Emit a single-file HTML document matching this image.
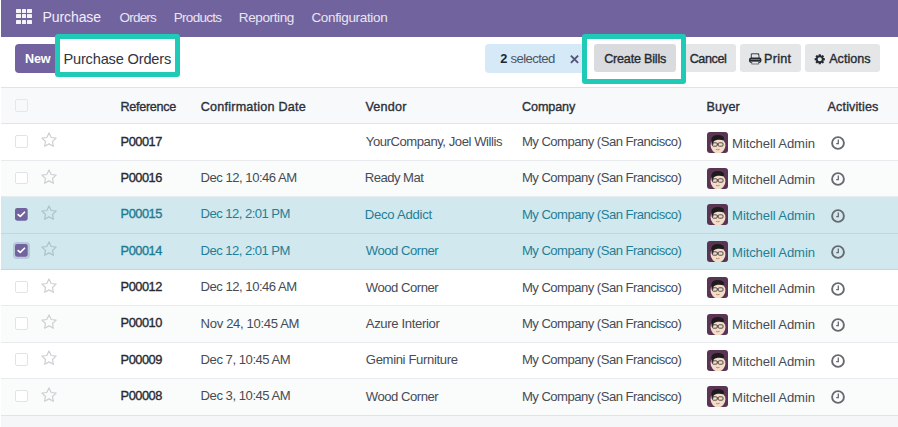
<!DOCTYPE html>
<html><head><meta charset="utf-8"><style>
html,body{margin:0;padding:0;}
body{width:898px;height:427px;overflow:hidden;position:relative;background:#fff;font-family:"Liberation Sans",sans-serif;}
.t{position:absolute;white-space:nowrap;line-height:1;}
.r{position:absolute;}
</style></head><body>
<div class="r" style="left:1px;top:0px;width:897px;height:37px;background:#71639e;"></div>
<div class="r" style="left:16.0px;top:8.5px;width:4.6px;height:4.4px;background:rgba(255,255,255,0.92);border-radius:0.5px;"></div>
<div class="r" style="left:16.0px;top:14.0px;width:4.6px;height:4.4px;background:rgba(255,255,255,0.92);border-radius:0.5px;"></div>
<div class="r" style="left:16.0px;top:19.5px;width:4.6px;height:4.4px;background:rgba(255,255,255,0.92);border-radius:0.5px;"></div>
<div class="r" style="left:21.6px;top:8.5px;width:4.6px;height:4.4px;background:rgba(255,255,255,0.92);border-radius:0.5px;"></div>
<div class="r" style="left:21.6px;top:14.0px;width:4.6px;height:4.4px;background:rgba(255,255,255,0.92);border-radius:0.5px;"></div>
<div class="r" style="left:21.6px;top:19.5px;width:4.6px;height:4.4px;background:rgba(255,255,255,0.92);border-radius:0.5px;"></div>
<div class="r" style="left:27.2px;top:8.5px;width:4.6px;height:4.4px;background:rgba(255,255,255,0.92);border-radius:0.5px;"></div>
<div class="r" style="left:27.2px;top:14.0px;width:4.6px;height:4.4px;background:rgba(255,255,255,0.92);border-radius:0.5px;"></div>
<div class="r" style="left:27.2px;top:19.5px;width:4.6px;height:4.4px;background:rgba(255,255,255,0.92);border-radius:0.5px;"></div>
<div class="t" style="left:42.40px;top:9.95px;font-size:14px;color:#f1eef7;font-weight:normal;letter-spacing:-0.065px;">Purchase</div>
<div class="t" style="left:119.60px;top:10.77px;font-size:13.5px;color:#e9e5f1;font-weight:normal;letter-spacing:-0.822px;">Orders</div>
<div class="t" style="left:173.80px;top:10.77px;font-size:13.5px;color:#e9e5f1;font-weight:normal;letter-spacing:-0.718px;">Products</div>
<div class="t" style="left:238.80px;top:10.77px;font-size:13.5px;color:#e9e5f1;font-weight:normal;letter-spacing:-0.378px;">Reporting</div>
<div class="t" style="left:311.40px;top:10.77px;font-size:13.5px;color:#e9e5f1;font-weight:normal;letter-spacing:-0.333px;">Configuration</div>
<div class="r" style="left:15px;top:44.2px;width:45px;height:28.6px;background:#72629f;border-radius:4px;"></div>
<div class="t" style="left:25.00px;top:53.13px;font-size:12.6px;color:#ffffff;font-weight:bold;letter-spacing:-0.199px;">New</div>
<div class="t" style="left:63.40px;top:51.54px;font-size:14.6px;color:#2f3542;font-weight:normal;letter-spacing:-0.172px;">Purchase Orders</div>
<div class="r" style="left:485px;top:44.4px;width:100px;height:28.2px;background:#d6e9f6;border-radius:4px;"></div>
<div class="t" style="left:500.20px;top:53.06px;font-size:12.8px;color:#222831;font-weight:bold;letter-spacing:0.000px;">2</div>
<div class="t" style="left:510.60px;top:52.23px;font-size:13.2px;color:#4b5563;font-weight:normal;letter-spacing:-0.626px;">selected</div>
<svg class="r" style="left:570.2px;top:55px" width="9" height="8.5" viewBox="0 0 9 8.5"><path d="M0.9 0.7 L8.1 7.9 M8.1 0.7 L0.9 7.9" stroke="#545479" stroke-width="1.9"/></svg>
<div class="r" style="left:594px;top:44.2px;width:82px;height:28.1px;background:#d9dbde;border-radius:3px;"></div>
<div class="t" style="left:604.20px;top:53.13px;font-size:12.6px;color:#262b33;font-weight:normal;letter-spacing:-0.208px;-webkit-text-stroke:0.35px #262b33;">Create Bills</div>
<div class="r" style="left:681px;top:44.2px;width:55px;height:28.1px;background:#e4e6e8;border-radius:3px;"></div>
<div class="t" style="left:689.70px;top:53.13px;font-size:12.6px;color:#262b33;font-weight:normal;letter-spacing:-0.421px;-webkit-text-stroke:0.35px #262b33;">Cancel</div>
<div class="r" style="left:740px;top:44.2px;width:60.6px;height:28.1px;background:#e4e6e8;border-radius:3px;"></div>
<div class="t" style="left:764.00px;top:53.13px;font-size:12.6px;color:#262b33;font-weight:normal;letter-spacing:0.276px;-webkit-text-stroke:0.35px #262b33;">Print</div>
<svg class="r" style="left:749px;top:53.3px" width="12.5" height="11.5" viewBox="0 0 12.5 11.5"><path d="M2.3 5 V0.8 H8.4 L10 2.4 V5" fill="none" stroke="#3a3f47" stroke-width="1"/><path d="M8.2 0.6 L10.2 0.6 L10.2 2.6 Z" fill="#262b33"/><rect x="0.7" y="5.2" width="11.1" height="4" rx="1.6" fill="none" stroke="#262b33" stroke-width="1.4"/><path d="M1 7.2 H11.5" stroke="#262b33" stroke-width="1.6"/><rect x="2.8" y="8.6" width="6.9" height="2.4" fill="#e6e8eb" stroke="#555a62" stroke-width="0.8"/></svg>
<div class="r" style="left:805.2px;top:44.2px;width:75px;height:28.1px;background:#e4e6e8;border-radius:3px;"></div>
<div class="t" style="left:829.20px;top:53.13px;font-size:12.6px;color:#262b33;font-weight:normal;letter-spacing:0.016px;-webkit-text-stroke:0.35px #262b33;">Actions</div>
<svg class="r" style="left:814px;top:54px" width="11.5" height="10.5" viewBox="0 0 11.5 10.5"><path d="M10.86 4.27 L10.86 6.23 L9.44 6.51 L9.25 6.97 L10.06 8.17 L8.67 9.56 L7.47 8.75 L7.01 8.94 L6.73 10.36 L4.77 10.36 L4.49 8.94 L4.03 8.75 L2.83 9.56 L1.44 8.17 L2.25 6.97 L2.06 6.51 L0.64 6.23 L0.64 4.27 L2.06 3.99 L2.25 3.53 L1.44 2.33 L2.83 0.94 L4.03 1.75 L4.49 1.56 L4.77 0.14 L6.73 0.14 L7.01 1.56 L7.47 1.75 L8.67 0.94 L10.06 2.33 L9.25 3.53 L9.44 3.99 Z M5.75 3.15 A2.1 2.1 0 1 0 5.75 7.35 A2.1 2.1 0 1 0 5.75 3.15 Z" fill="#262b33" fill-rule="evenodd"/></svg>
<div class="r" style="left:1px;top:87.5px;width:897px;height:36.5px;background:#f8f9fa;"></div>
<div class="r" style="left:1px;top:86.8px;width:897px;height:1px;background:#e1e2e4;"></div>
<div class="r" style="left:1px;top:123.2px;width:897px;height:1px;background:#e4e5e7;"></div>
<div class="r" style="left:15px;top:98.8px;width:12.8px;height:12.8px;background:#f8f9fa;border:1px solid #e6e7e9;border-radius:2px;box-sizing:border-box;"></div>
<div class="t" style="left:120.50px;top:100.83px;font-size:12.6px;color:#2b303a;font-weight:normal;letter-spacing:-0.300px;-webkit-text-stroke:0.35px #2b303a;">Reference</div>
<div class="t" style="left:200.80px;top:100.83px;font-size:12.6px;color:#2b303a;font-weight:normal;letter-spacing:0.213px;-webkit-text-stroke:0.35px #2b303a;">Confirmation Date</div>
<div class="t" style="left:365.40px;top:100.83px;font-size:12.6px;color:#2b303a;font-weight:normal;letter-spacing:0.216px;-webkit-text-stroke:0.35px #2b303a;">Vendor</div>
<div class="t" style="left:522.00px;top:100.83px;font-size:12.6px;color:#2b303a;font-weight:normal;letter-spacing:-0.100px;-webkit-text-stroke:0.35px #2b303a;">Company</div>
<div class="t" style="left:706.50px;top:100.83px;font-size:12.6px;color:#2b303a;font-weight:normal;letter-spacing:0.074px;-webkit-text-stroke:0.35px #2b303a;">Buyer</div>
<div class="t" style="left:827.60px;top:100.83px;font-size:12.6px;color:#2b303a;font-weight:normal;letter-spacing:0.112px;-webkit-text-stroke:0.35px #2b303a;">Activities</div>
<div class="r" style="left:1px;top:124px;width:897px;height:36.30000000000001px;background:#ffffff;"></div>
<div class="r" style="left:15px;top:135.4px;width:12.6px;height:12.6px;background:#fff;border:1px solid #e1e3e6;border-radius:2px;box-sizing:border-box;"></div>
<svg class="r" style="left:40.5px;top:132.4px" width="16" height="16" viewBox="0 0 16 16"><path d="M8 0.9 L10.2 5.5 L15.1 6.1 L11.5 9.5 L12.4 14.3 L8 11.9 L3.6 14.3 L4.5 9.5 L0.9 6.1 L5.8 5.5 Z" fill="none" stroke="#cdd0d3" stroke-width="1.2" stroke-linejoin="round"/></svg>
<div class="t" style="left:120.60px;top:135.66px;font-size:12.8px;color:#262a33;font-weight:normal;letter-spacing:-0.481px;-webkit-text-stroke:0.35px #262a33;">P00017</div>
<div class="t" style="left:365.80px;top:135.11px;font-size:13.1px;color:#464c56;font-weight:normal;letter-spacing:-0.450px;">YourCompany, Joel Willis</div>
<div class="t" style="left:521.90px;top:135.11px;font-size:13.1px;color:#464c56;font-weight:normal;letter-spacing:-0.529px;">My Company (San Francisco)</div>
<svg class="r" style="left:707px;top:131.8px" width="21" height="21" viewBox="0 0 21 21"><defs><clipPath id="ac"><rect width="21" height="21" rx="3"/></clipPath></defs><g clip-path="url(#ac)"><rect width="21" height="21" fill="#5a3553"/><ellipse cx="11" cy="13.6" rx="7.4" ry="7.8" fill="#f3dcc8"/><path d="M4.6 12.5 L4.4 6.8 Q5.2 3 10.8 3 Q16.6 3.2 17 6.2 L16.6 8.4 Q14 7.4 10.6 7.8 Q7.6 8.2 6.6 9.6 L6.2 12.8 Z" fill="#1e1a1d"/><rect x="5.4" y="10.8" width="4.8" height="3.4" rx="1" fill="none" stroke="#3a3436" stroke-width="0.85"/><rect x="11.2" y="10.8" width="4.8" height="3.4" rx="1" fill="none" stroke="#3a3436" stroke-width="0.85"/><path d="M10.2 12 H11.2" stroke="#2b2b2b" stroke-width="0.8"/><path d="M9 17.3 Q10.8 18.3 12.6 17.3" fill="none" stroke="#b07a60" stroke-width="0.8"/></g></svg>
<div class="t" style="left:732.10px;top:136.51px;font-size:13.1px;color:#464c56;font-weight:normal;letter-spacing:-0.119px;">Mitchell Admin</div>
<svg class="r" style="left:831.3px;top:136px" width="14" height="14" viewBox="0 0 14 14"><circle cx="7" cy="7" r="5.9" fill="none" stroke="#666a70" stroke-width="1.9"/><path d="M7.3 3.6 V7.6 H5.2" fill="none" stroke="#666a70" stroke-width="1.3"/></svg>
<div class="r" style="left:1px;top:160.3px;width:897px;height:36.19999999999999px;background:#fafbfb;"></div>
<div class="r" style="left:15px;top:171.70000000000002px;width:12.6px;height:12.6px;background:#fff;border:1px solid #e1e3e6;border-radius:2px;box-sizing:border-box;"></div>
<svg class="r" style="left:40.5px;top:168.70000000000002px" width="16" height="16" viewBox="0 0 16 16"><path d="M8 0.9 L10.2 5.5 L15.1 6.1 L11.5 9.5 L12.4 14.3 L8 11.9 L3.6 14.3 L4.5 9.5 L0.9 6.1 L5.8 5.5 Z" fill="none" stroke="#cdd0d3" stroke-width="1.2" stroke-linejoin="round"/></svg>
<div class="t" style="left:120.60px;top:171.96px;font-size:12.8px;color:#262a33;font-weight:normal;letter-spacing:-0.481px;-webkit-text-stroke:0.35px #262a33;">P00016</div>
<div class="t" style="left:200.60px;top:171.21px;font-size:13.1px;color:#464c56;font-weight:normal;letter-spacing:-0.500px;">Dec 12, 10:46 AM</div>
<div class="t" style="left:364.80px;top:171.41px;font-size:13.1px;color:#464c56;font-weight:normal;letter-spacing:-0.535px;">Ready Mat</div>
<div class="t" style="left:521.90px;top:171.41px;font-size:13.1px;color:#464c56;font-weight:normal;letter-spacing:-0.529px;">My Company (San Francisco)</div>
<svg class="r" style="left:707px;top:168.10000000000002px" width="21" height="21" viewBox="0 0 21 21"><defs><clipPath id="ac"><rect width="21" height="21" rx="3"/></clipPath></defs><g clip-path="url(#ac)"><rect width="21" height="21" fill="#5a3553"/><ellipse cx="11" cy="13.6" rx="7.4" ry="7.8" fill="#f3dcc8"/><path d="M4.6 12.5 L4.4 6.8 Q5.2 3 10.8 3 Q16.6 3.2 17 6.2 L16.6 8.4 Q14 7.4 10.6 7.8 Q7.6 8.2 6.6 9.6 L6.2 12.8 Z" fill="#1e1a1d"/><rect x="5.4" y="10.8" width="4.8" height="3.4" rx="1" fill="none" stroke="#3a3436" stroke-width="0.85"/><rect x="11.2" y="10.8" width="4.8" height="3.4" rx="1" fill="none" stroke="#3a3436" stroke-width="0.85"/><path d="M10.2 12 H11.2" stroke="#2b2b2b" stroke-width="0.8"/><path d="M9 17.3 Q10.8 18.3 12.6 17.3" fill="none" stroke="#b07a60" stroke-width="0.8"/></g></svg>
<div class="t" style="left:732.10px;top:172.81px;font-size:13.1px;color:#464c56;font-weight:normal;letter-spacing:-0.119px;">Mitchell Admin</div>
<svg class="r" style="left:831.3px;top:172.3px" width="14" height="14" viewBox="0 0 14 14"><circle cx="7" cy="7" r="5.9" fill="none" stroke="#666a70" stroke-width="1.9"/><path d="M7.3 3.6 V7.6 H5.2" fill="none" stroke="#666a70" stroke-width="1.3"/></svg>
<div class="r" style="left:1px;top:196.5px;width:897px;height:36.5px;background:#d0e8ee;"></div>
<svg class="r" style="left:15px;top:207.9px" width="12.7" height="12.7" viewBox="0 0 12 12"><rect x="0" y="0" width="12" height="12" rx="2" fill="#71639e"/><path d="M3 6.2 L5 8 L9 4" fill="none" stroke="#fff" stroke-width="1.6" stroke-linecap="round" stroke-linejoin="round"/></svg>
<svg class="r" style="left:40.5px;top:204.9px" width="16" height="16" viewBox="0 0 16 16"><path d="M8 0.9 L10.2 5.5 L15.1 6.1 L11.5 9.5 L12.4 14.3 L8 11.9 L3.6 14.3 L4.5 9.5 L0.9 6.1 L5.8 5.5 Z" fill="none" stroke="#aac4ca" stroke-width="1.2" stroke-linejoin="round"/></svg>
<div class="t" style="left:120.60px;top:208.16px;font-size:12.8px;color:#1d7b93;font-weight:normal;letter-spacing:-0.481px;-webkit-text-stroke:0.35px #1d7b93;">P00015</div>
<div class="t" style="left:200.60px;top:207.41px;font-size:13.1px;color:#1f7f96;font-weight:normal;letter-spacing:-0.551px;">Dec 12, 2:01 PM</div>
<div class="t" style="left:364.80px;top:207.61px;font-size:13.1px;color:#1f7f96;font-weight:normal;letter-spacing:-0.256px;">Deco Addict</div>
<div class="t" style="left:521.90px;top:207.61px;font-size:13.1px;color:#1f7f96;font-weight:normal;letter-spacing:-0.529px;">My Company (San Francisco)</div>
<svg class="r" style="left:707px;top:204.3px" width="21" height="21" viewBox="0 0 21 21"><defs><clipPath id="ac"><rect width="21" height="21" rx="3"/></clipPath></defs><g clip-path="url(#ac)"><rect width="21" height="21" fill="#5a3553"/><ellipse cx="11" cy="13.6" rx="7.4" ry="7.8" fill="#f3dcc8"/><path d="M4.6 12.5 L4.4 6.8 Q5.2 3 10.8 3 Q16.6 3.2 17 6.2 L16.6 8.4 Q14 7.4 10.6 7.8 Q7.6 8.2 6.6 9.6 L6.2 12.8 Z" fill="#1e1a1d"/><rect x="5.4" y="10.8" width="4.8" height="3.4" rx="1" fill="none" stroke="#3a3436" stroke-width="0.85"/><rect x="11.2" y="10.8" width="4.8" height="3.4" rx="1" fill="none" stroke="#3a3436" stroke-width="0.85"/><path d="M10.2 12 H11.2" stroke="#2b2b2b" stroke-width="0.8"/><path d="M9 17.3 Q10.8 18.3 12.6 17.3" fill="none" stroke="#b07a60" stroke-width="0.8"/></g></svg>
<div class="t" style="left:732.10px;top:209.01px;font-size:13.1px;color:#1f7f96;font-weight:normal;letter-spacing:-0.119px;">Mitchell Admin</div>
<svg class="r" style="left:831.3px;top:208.5px" width="14" height="14" viewBox="0 0 14 14"><circle cx="7" cy="7" r="5.9" fill="none" stroke="#666a70" stroke-width="1.9"/><path d="M7.3 3.6 V7.6 H5.2" fill="none" stroke="#666a70" stroke-width="1.3"/></svg>
<div class="r" style="left:1px;top:233px;width:897px;height:36.5px;background:#d0e8ee;"></div>
<div class="r" style="left:12.7px;top:242.1px;width:17.3px;height:17.3px;background:rgba(113,99,158,0.25);border-radius:4px;"></div>
<svg class="r" style="left:15px;top:244.4px" width="12.7" height="12.7" viewBox="0 0 12 12"><rect x="0" y="0" width="12" height="12" rx="2" fill="#71639e"/><path d="M3 6.2 L5 8 L9 4" fill="none" stroke="#fff" stroke-width="1.6" stroke-linecap="round" stroke-linejoin="round"/></svg>
<svg class="r" style="left:40.5px;top:241.4px" width="16" height="16" viewBox="0 0 16 16"><path d="M8 0.9 L10.2 5.5 L15.1 6.1 L11.5 9.5 L12.4 14.3 L8 11.9 L3.6 14.3 L4.5 9.5 L0.9 6.1 L5.8 5.5 Z" fill="none" stroke="#aac4ca" stroke-width="1.2" stroke-linejoin="round"/></svg>
<div class="t" style="left:120.60px;top:244.66px;font-size:12.8px;color:#1d7b93;font-weight:normal;letter-spacing:-0.481px;-webkit-text-stroke:0.35px #1d7b93;">P00014</div>
<div class="t" style="left:200.60px;top:243.91px;font-size:13.1px;color:#1f7f96;font-weight:normal;letter-spacing:-0.551px;">Dec 12, 2:01 PM</div>
<div class="t" style="left:365.80px;top:244.11px;font-size:13.1px;color:#1f7f96;font-weight:normal;letter-spacing:-0.477px;">Wood Corner</div>
<div class="t" style="left:521.90px;top:244.11px;font-size:13.1px;color:#1f7f96;font-weight:normal;letter-spacing:-0.529px;">My Company (San Francisco)</div>
<svg class="r" style="left:707px;top:240.8px" width="21" height="21" viewBox="0 0 21 21"><defs><clipPath id="ac"><rect width="21" height="21" rx="3"/></clipPath></defs><g clip-path="url(#ac)"><rect width="21" height="21" fill="#5a3553"/><ellipse cx="11" cy="13.6" rx="7.4" ry="7.8" fill="#f3dcc8"/><path d="M4.6 12.5 L4.4 6.8 Q5.2 3 10.8 3 Q16.6 3.2 17 6.2 L16.6 8.4 Q14 7.4 10.6 7.8 Q7.6 8.2 6.6 9.6 L6.2 12.8 Z" fill="#1e1a1d"/><rect x="5.4" y="10.8" width="4.8" height="3.4" rx="1" fill="none" stroke="#3a3436" stroke-width="0.85"/><rect x="11.2" y="10.8" width="4.8" height="3.4" rx="1" fill="none" stroke="#3a3436" stroke-width="0.85"/><path d="M10.2 12 H11.2" stroke="#2b2b2b" stroke-width="0.8"/><path d="M9 17.3 Q10.8 18.3 12.6 17.3" fill="none" stroke="#b07a60" stroke-width="0.8"/></g></svg>
<div class="t" style="left:732.10px;top:245.51px;font-size:13.1px;color:#1f7f96;font-weight:normal;letter-spacing:-0.119px;">Mitchell Admin</div>
<svg class="r" style="left:831.3px;top:245px" width="14" height="14" viewBox="0 0 14 14"><circle cx="7" cy="7" r="5.9" fill="none" stroke="#666a70" stroke-width="1.9"/><path d="M7.3 3.6 V7.6 H5.2" fill="none" stroke="#666a70" stroke-width="1.3"/></svg>
<div class="r" style="left:1px;top:269.5px;width:897px;height:36.30000000000001px;background:#ffffff;"></div>
<div class="r" style="left:15px;top:280.9px;width:12.6px;height:12.6px;background:#fff;border:1px solid #e1e3e6;border-radius:2px;box-sizing:border-box;"></div>
<svg class="r" style="left:40.5px;top:277.9px" width="16" height="16" viewBox="0 0 16 16"><path d="M8 0.9 L10.2 5.5 L15.1 6.1 L11.5 9.5 L12.4 14.3 L8 11.9 L3.6 14.3 L4.5 9.5 L0.9 6.1 L5.8 5.5 Z" fill="none" stroke="#cdd0d3" stroke-width="1.2" stroke-linejoin="round"/></svg>
<div class="t" style="left:120.60px;top:281.16px;font-size:12.8px;color:#262a33;font-weight:normal;letter-spacing:-0.481px;-webkit-text-stroke:0.35px #262a33;">P00012</div>
<div class="t" style="left:200.60px;top:280.41px;font-size:13.1px;color:#464c56;font-weight:normal;letter-spacing:-0.500px;">Dec 12, 10:46 AM</div>
<div class="t" style="left:365.80px;top:280.61px;font-size:13.1px;color:#464c56;font-weight:normal;letter-spacing:-0.477px;">Wood Corner</div>
<div class="t" style="left:521.90px;top:280.61px;font-size:13.1px;color:#464c56;font-weight:normal;letter-spacing:-0.529px;">My Company (San Francisco)</div>
<svg class="r" style="left:707px;top:277.3px" width="21" height="21" viewBox="0 0 21 21"><defs><clipPath id="ac"><rect width="21" height="21" rx="3"/></clipPath></defs><g clip-path="url(#ac)"><rect width="21" height="21" fill="#5a3553"/><ellipse cx="11" cy="13.6" rx="7.4" ry="7.8" fill="#f3dcc8"/><path d="M4.6 12.5 L4.4 6.8 Q5.2 3 10.8 3 Q16.6 3.2 17 6.2 L16.6 8.4 Q14 7.4 10.6 7.8 Q7.6 8.2 6.6 9.6 L6.2 12.8 Z" fill="#1e1a1d"/><rect x="5.4" y="10.8" width="4.8" height="3.4" rx="1" fill="none" stroke="#3a3436" stroke-width="0.85"/><rect x="11.2" y="10.8" width="4.8" height="3.4" rx="1" fill="none" stroke="#3a3436" stroke-width="0.85"/><path d="M10.2 12 H11.2" stroke="#2b2b2b" stroke-width="0.8"/><path d="M9 17.3 Q10.8 18.3 12.6 17.3" fill="none" stroke="#b07a60" stroke-width="0.8"/></g></svg>
<div class="t" style="left:732.10px;top:282.01px;font-size:13.1px;color:#464c56;font-weight:normal;letter-spacing:-0.119px;">Mitchell Admin</div>
<svg class="r" style="left:831.3px;top:281.5px" width="14" height="14" viewBox="0 0 14 14"><circle cx="7" cy="7" r="5.9" fill="none" stroke="#666a70" stroke-width="1.9"/><path d="M7.3 3.6 V7.6 H5.2" fill="none" stroke="#666a70" stroke-width="1.3"/></svg>
<div class="r" style="left:1px;top:305.8px;width:897px;height:36.19999999999999px;background:#fafbfb;"></div>
<div class="r" style="left:15px;top:317.2px;width:12.6px;height:12.6px;background:#fff;border:1px solid #e1e3e6;border-radius:2px;box-sizing:border-box;"></div>
<svg class="r" style="left:40.5px;top:314.2px" width="16" height="16" viewBox="0 0 16 16"><path d="M8 0.9 L10.2 5.5 L15.1 6.1 L11.5 9.5 L12.4 14.3 L8 11.9 L3.6 14.3 L4.5 9.5 L0.9 6.1 L5.8 5.5 Z" fill="none" stroke="#cdd0d3" stroke-width="1.2" stroke-linejoin="round"/></svg>
<div class="t" style="left:120.60px;top:317.46px;font-size:12.8px;color:#262a33;font-weight:normal;letter-spacing:-0.481px;-webkit-text-stroke:0.35px #262a33;">P00010</div>
<div class="t" style="left:200.60px;top:316.71px;font-size:13.1px;color:#464c56;font-weight:normal;letter-spacing:-0.347px;">Nov 24, 10:45 AM</div>
<div class="t" style="left:365.80px;top:316.91px;font-size:13.1px;color:#464c56;font-weight:normal;letter-spacing:-0.356px;">Azure Interior</div>
<div class="t" style="left:521.90px;top:316.91px;font-size:13.1px;color:#464c56;font-weight:normal;letter-spacing:-0.529px;">My Company (San Francisco)</div>
<svg class="r" style="left:707px;top:313.6px" width="21" height="21" viewBox="0 0 21 21"><defs><clipPath id="ac"><rect width="21" height="21" rx="3"/></clipPath></defs><g clip-path="url(#ac)"><rect width="21" height="21" fill="#5a3553"/><ellipse cx="11" cy="13.6" rx="7.4" ry="7.8" fill="#f3dcc8"/><path d="M4.6 12.5 L4.4 6.8 Q5.2 3 10.8 3 Q16.6 3.2 17 6.2 L16.6 8.4 Q14 7.4 10.6 7.8 Q7.6 8.2 6.6 9.6 L6.2 12.8 Z" fill="#1e1a1d"/><rect x="5.4" y="10.8" width="4.8" height="3.4" rx="1" fill="none" stroke="#3a3436" stroke-width="0.85"/><rect x="11.2" y="10.8" width="4.8" height="3.4" rx="1" fill="none" stroke="#3a3436" stroke-width="0.85"/><path d="M10.2 12 H11.2" stroke="#2b2b2b" stroke-width="0.8"/><path d="M9 17.3 Q10.8 18.3 12.6 17.3" fill="none" stroke="#b07a60" stroke-width="0.8"/></g></svg>
<div class="t" style="left:732.10px;top:318.31px;font-size:13.1px;color:#464c56;font-weight:normal;letter-spacing:-0.119px;">Mitchell Admin</div>
<svg class="r" style="left:831.3px;top:317.8px" width="14" height="14" viewBox="0 0 14 14"><circle cx="7" cy="7" r="5.9" fill="none" stroke="#666a70" stroke-width="1.9"/><path d="M7.3 3.6 V7.6 H5.2" fill="none" stroke="#666a70" stroke-width="1.3"/></svg>
<div class="r" style="left:1px;top:342px;width:897px;height:36.39999999999998px;background:#ffffff;"></div>
<div class="r" style="left:15px;top:353.4px;width:12.6px;height:12.6px;background:#fff;border:1px solid #e1e3e6;border-radius:2px;box-sizing:border-box;"></div>
<svg class="r" style="left:40.5px;top:350.4px" width="16" height="16" viewBox="0 0 16 16"><path d="M8 0.9 L10.2 5.5 L15.1 6.1 L11.5 9.5 L12.4 14.3 L8 11.9 L3.6 14.3 L4.5 9.5 L0.9 6.1 L5.8 5.5 Z" fill="none" stroke="#cdd0d3" stroke-width="1.2" stroke-linejoin="round"/></svg>
<div class="t" style="left:120.60px;top:353.66px;font-size:12.8px;color:#262a33;font-weight:normal;letter-spacing:-0.481px;-webkit-text-stroke:0.35px #262a33;">P00009</div>
<div class="t" style="left:200.60px;top:352.91px;font-size:13.1px;color:#464c56;font-weight:normal;letter-spacing:-0.473px;">Dec 7, 10:45 AM</div>
<div class="t" style="left:365.80px;top:353.11px;font-size:13.1px;color:#464c56;font-weight:normal;letter-spacing:-0.348px;">Gemini Furniture</div>
<div class="t" style="left:521.90px;top:353.11px;font-size:13.1px;color:#464c56;font-weight:normal;letter-spacing:-0.529px;">My Company (San Francisco)</div>
<svg class="r" style="left:707px;top:349.8px" width="21" height="21" viewBox="0 0 21 21"><defs><clipPath id="ac"><rect width="21" height="21" rx="3"/></clipPath></defs><g clip-path="url(#ac)"><rect width="21" height="21" fill="#5a3553"/><ellipse cx="11" cy="13.6" rx="7.4" ry="7.8" fill="#f3dcc8"/><path d="M4.6 12.5 L4.4 6.8 Q5.2 3 10.8 3 Q16.6 3.2 17 6.2 L16.6 8.4 Q14 7.4 10.6 7.8 Q7.6 8.2 6.6 9.6 L6.2 12.8 Z" fill="#1e1a1d"/><rect x="5.4" y="10.8" width="4.8" height="3.4" rx="1" fill="none" stroke="#3a3436" stroke-width="0.85"/><rect x="11.2" y="10.8" width="4.8" height="3.4" rx="1" fill="none" stroke="#3a3436" stroke-width="0.85"/><path d="M10.2 12 H11.2" stroke="#2b2b2b" stroke-width="0.8"/><path d="M9 17.3 Q10.8 18.3 12.6 17.3" fill="none" stroke="#b07a60" stroke-width="0.8"/></g></svg>
<div class="t" style="left:732.10px;top:354.51px;font-size:13.1px;color:#464c56;font-weight:normal;letter-spacing:-0.119px;">Mitchell Admin</div>
<svg class="r" style="left:831.3px;top:354px" width="14" height="14" viewBox="0 0 14 14"><circle cx="7" cy="7" r="5.9" fill="none" stroke="#666a70" stroke-width="1.9"/><path d="M7.3 3.6 V7.6 H5.2" fill="none" stroke="#666a70" stroke-width="1.3"/></svg>
<div class="r" style="left:1px;top:378.4px;width:897px;height:36.400000000000034px;background:#fafbfb;"></div>
<div class="r" style="left:15px;top:389.79999999999995px;width:12.6px;height:12.6px;background:#fff;border:1px solid #e1e3e6;border-radius:2px;box-sizing:border-box;"></div>
<svg class="r" style="left:40.5px;top:386.79999999999995px" width="16" height="16" viewBox="0 0 16 16"><path d="M8 0.9 L10.2 5.5 L15.1 6.1 L11.5 9.5 L12.4 14.3 L8 11.9 L3.6 14.3 L4.5 9.5 L0.9 6.1 L5.8 5.5 Z" fill="none" stroke="#cdd0d3" stroke-width="1.2" stroke-linejoin="round"/></svg>
<div class="t" style="left:120.60px;top:390.06px;font-size:12.8px;color:#262a33;font-weight:normal;letter-spacing:-0.481px;-webkit-text-stroke:0.35px #262a33;">P00008</div>
<div class="t" style="left:200.60px;top:389.31px;font-size:13.1px;color:#464c56;font-weight:normal;letter-spacing:-0.473px;">Dec 3, 10:45 AM</div>
<div class="t" style="left:365.80px;top:389.51px;font-size:13.1px;color:#464c56;font-weight:normal;letter-spacing:-0.477px;">Wood Corner</div>
<div class="t" style="left:521.90px;top:389.51px;font-size:13.1px;color:#464c56;font-weight:normal;letter-spacing:-0.529px;">My Company (San Francisco)</div>
<svg class="r" style="left:707px;top:386.2px" width="21" height="21" viewBox="0 0 21 21"><defs><clipPath id="ac"><rect width="21" height="21" rx="3"/></clipPath></defs><g clip-path="url(#ac)"><rect width="21" height="21" fill="#5a3553"/><ellipse cx="11" cy="13.6" rx="7.4" ry="7.8" fill="#f3dcc8"/><path d="M4.6 12.5 L4.4 6.8 Q5.2 3 10.8 3 Q16.6 3.2 17 6.2 L16.6 8.4 Q14 7.4 10.6 7.8 Q7.6 8.2 6.6 9.6 L6.2 12.8 Z" fill="#1e1a1d"/><rect x="5.4" y="10.8" width="4.8" height="3.4" rx="1" fill="none" stroke="#3a3436" stroke-width="0.85"/><rect x="11.2" y="10.8" width="4.8" height="3.4" rx="1" fill="none" stroke="#3a3436" stroke-width="0.85"/><path d="M10.2 12 H11.2" stroke="#2b2b2b" stroke-width="0.8"/><path d="M9 17.3 Q10.8 18.3 12.6 17.3" fill="none" stroke="#b07a60" stroke-width="0.8"/></g></svg>
<div class="t" style="left:732.10px;top:390.91px;font-size:13.1px;color:#464c56;font-weight:normal;letter-spacing:-0.119px;">Mitchell Admin</div>
<svg class="r" style="left:831.3px;top:390.4px" width="14" height="14" viewBox="0 0 14 14"><circle cx="7" cy="7" r="5.9" fill="none" stroke="#666a70" stroke-width="1.9"/><path d="M7.3 3.6 V7.6 H5.2" fill="none" stroke="#666a70" stroke-width="1.3"/></svg>
<div class="r" style="left:1px;top:159.9px;width:897px;height:1px;background:#e8eaed;"></div>
<div class="r" style="left:1px;top:196.1px;width:897px;height:1px;background:#e8eaed;"></div>
<div class="r" style="left:1px;top:232.6px;width:897px;height:1px;background:#bdd8de;"></div>
<div class="r" style="left:1px;top:269.1px;width:897px;height:1px;background:#bdd8de;"></div>
<div class="r" style="left:1px;top:305.40000000000003px;width:897px;height:1px;background:#e8eaed;"></div>
<div class="r" style="left:1px;top:341.6px;width:897px;height:1px;background:#e8eaed;"></div>
<div class="r" style="left:1px;top:378.0px;width:897px;height:1px;background:#e8eaed;"></div>
<div class="r" style="left:1px;top:415.2px;width:897px;height:12px;background:#f5f6f8;"></div>
<div class="r" style="left:1px;top:414.6px;width:897px;height:1px;background:#e2e4e7;"></div>
<div class="r" style="left:54.5px;top:34.2px;width:125.3px;height:42.6px;background:transparent;border:5.0px solid #1fcbb6;border-radius:3px;box-sizing:border-box;"></div>
<div class="r" style="left:582.4px;top:34.2px;width:103.5px;height:49.6px;background:transparent;border:5.0px solid #1fcbb6;border-radius:3px;box-sizing:border-box;"></div>
</body></html>
